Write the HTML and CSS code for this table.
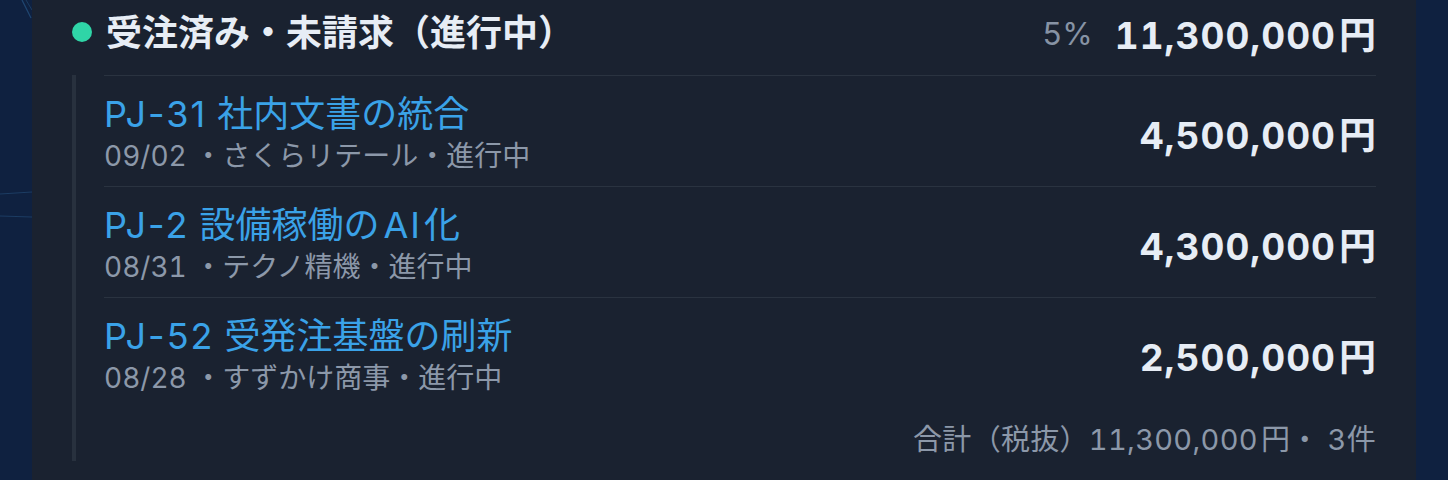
FILE: index.html
```html
<!DOCTYPE html>
<html lang="ja">
<head>
<meta charset="utf-8">
<title>受注済み・未請求</title>
<link rel="stylesheet" href="styles.css">
</head>
<body>
<svg class="deco" width="32" height="480" viewBox="0 0 32 480" aria-hidden="true">
  <path d="M22 0 L31 18" stroke="#1f4670" stroke-width="1.2" fill="none"/>
  <path d="M26 0 L32 10" stroke="#1a3c62" stroke-width="1" fill="none"/>
  <path d="M0 194 L32 192" stroke="#1c3c62" stroke-width="1.2" fill="none"/>
  <path d="M0 216 L32 217" stroke="#1c3c62" stroke-width="1.2" fill="none"/>
</svg>
<main class="panel">
  <header class="group-head">
    <span class="dot"></span>
    <h2 class="group-title">受注済み・未請求（進行中）</h2>
    <span class="group-pct">5%</span>
    <span class="group-amount">11,300,000<span class="yen">円</span></span>
  </header>
  <section class="group-body">
    <div class="row">
      <div class="row-main">
        <a class="row-title"><span class="pj">PJ-31</span> 社内文書の統合</a>
        <div class="row-sub">09/02 ・さくらリテール・進行中</div>
      </div>
      <div class="row-amount">4,500,000<span class="yen">円</span></div>
    </div>
    <div class="row">
      <div class="row-main">
        <a class="row-title"><span class="pj">PJ-2</span> 設備稼働の<span class="ai">AI</span>化</a>
        <div class="row-sub">08/31 ・テクノ精機・進行中</div>
      </div>
      <div class="row-amount">4,300,000<span class="yen">円</span></div>
    </div>
    <div class="row">
      <div class="row-main">
        <a class="row-title"><span class="pj">PJ-52</span> 受発注基盤の刷新</a>
        <div class="row-sub">08/28 ・すずかけ商事・進行中</div>
      </div>
      <div class="row-amount">2,500,000<span class="yen">円</span></div>
    </div>
    <div class="total">合計（税抜）11,300,000<span class="yen-s">円</span>・ 3件</div>
  </section>
</main>
</body>
</html>
```
FILE: styles.css
```css
* { box-sizing: border-box; }
html, body { margin: 0; padding: 0; }
body {
  background: #0f2140;
  font-family: Inter, "Noto Sans CJK JP", sans-serif;
  height: 480px;
  overflow: hidden;
  display: flex;
}
.deco {
  position: absolute;
  left: 0;
  top: 0;
}
.panel {
  margin-left: 32px;
  width: 1384px;
  min-height: 480px;
  background: #1a2230;
  padding: 0 40px 0 40px;
}
.group-head {
  height: 66px;
  display: flex;
  align-items: center;
}
.dot {
  width: 20px;
  height: 20px;
  border-radius: 50%;
  background: #2fd5a7;
  flex: none;
  margin-right: 14px;
  margin-top: -2px;
}
.group-title {
  margin: 0;
  font-size: 36px;
  font-weight: 700;
  color: #e7edf5;
  flex: 1;
  line-height: 48px;
}
.group-pct {
  font-size: 31px;
  color: #8793a4;
  margin-right: 22px;
  font-variant-numeric: tabular-nums;
}
.group-amount {
  font-size: 37px;
  font-weight: 700;
  color: #e7edf5;
  font-variant-numeric: tabular-nums;
  letter-spacing: 1px;
}
.yen {
  margin-left: 3px;
  letter-spacing: 0;
}
.yen-s {
  margin-left: 3px;
}
.group-body {
  margin-top: 9px;
  border-left: 4px solid #28313e;
  padding-left: 28px;
  padding-bottom: 1px;
}
.row {
  display: flex;
  align-items: center;
  border-top: 1px solid #2a3340;
  padding: 14px 0 12px 0;
}
.row-main {
  flex: 1;
  display: flex;
  flex-direction: column;
}
.row-title {
  font-size: 36px;
  line-height: 48px;
  color: #3aa2e8;
}
.pj {
  letter-spacing: 2px;
}
.ai {
  margin: 0 2px 0 4px;
  letter-spacing: 2px;
}
.row-sub {
  font-size: 28px;
  line-height: 36px;
  color: #8c98a9;
  font-variant-numeric: tabular-nums;
}
.row-amount {
  font-size: 37px;
  font-weight: 700;
  color: #e7edf5;
  margin-top: 2px;
  font-variant-numeric: tabular-nums;
  letter-spacing: 1px;
}
.total {
  padding-top: 12px;
  font-size: 29px;
  line-height: 40px;
  color: #8c98a9;
  text-align: right;
  font-variant-numeric: tabular-nums;
  letter-spacing: 0.3px;
}
```
